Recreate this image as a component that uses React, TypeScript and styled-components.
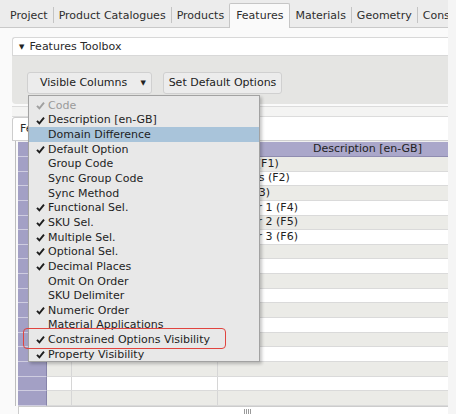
import React from 'react';
import styled, { createGlobalStyle } from 'styled-components';

const GlobalStyle = createGlobalStyle`
  html, body {
    margin: 0;
    padding: 0;
    background: #f5f5f5;
  }
  body {
    font-family: 'DejaVu Sans', Verdana, sans-serif;
    font-size: 11px;
    line-height: 14px;
    color: #2a2a2a;
  }
`;

const Page = styled.div`
  position: relative;
  width: 448px;
  height: 414px;
  overflow: hidden;
  background: #fafafa;
`;

const TabBar = styled.div`
  display: flex;
  align-items: flex-end;
  height: 28px;
  box-sizing: border-box;
  padding-left: 5px;
  background: #ececec;
  border-bottom: 1px solid #c9c9c9;
  white-space: nowrap;
`;

const Tab = styled.div<{ $active?: boolean }>`
  display: flex;
  align-items: center;
  box-sizing: border-box;
  height: ${({ $active }) => ($active ? '25px' : '22px')};
  padding: 0 ${({ $active }) => ($active ? '6px' : '5px')};
  margin-bottom: ${({ $active }) => ($active ? '-1px' : '0')};
  background: ${({ $active }) => ($active ? '#fafafa' : 'transparent')};
  border: ${({ $active }) => ($active ? '1px solid #c6c6c6' : 'none')};
  border-bottom: none;
  border-radius: 2px 2px 0 0;
  color: #2e2e2e;
  flex: none;
`;

const TabSep = styled.div`
  width: 1px;
  height: 16px;
  margin-bottom: 4px;
  background: #c4c4c4;
  flex: none;
`;

const Main = styled.div`
  padding: 9px 0 0 12px;
`;

const ToolboxHeader = styled.div`
  display: flex;
  align-items: center;
  gap: 5px;
  height: 19px;
  box-sizing: border-box;
  padding-left: 6px;
  background: #ffffff;
  border: 1px solid #d8d8d8;
  border-right: none;
  border-radius: 3px 0 0 0;
  color: #2a2a2a;
`;

const Caret = styled.span`
  font-size: 7px;
  color: #222;
`;

const ToolboxBody = styled.div`
  display: flex;
  gap: 11px;
  height: 48px;
  box-sizing: border-box;
  padding: 16px 0 0 15px;
  background: #e5e5e3;
  border-bottom-left-radius: 4px;
`;

const Button = styled.div<{ $w: number; $menu?: boolean }>`
  display: flex;
  align-items: center;
  justify-content: ${({ $menu }) => ($menu ? 'space-between' : 'center')};
  width: ${({ $w }) => $w}px;
  height: 22px;
  box-sizing: border-box;
  padding: 0 ${({ $menu }) => ($menu ? '5px 0 12px' : '0')};
  background: #ececec;
  border: 1px solid #d0d0d0;
  border-radius: 3px;
  color: #222;
  white-space: nowrap;
`;

const SecondPanel = styled.div`
  margin-top: 2px;
`;

const Strip = styled.div`
  height: 9px;
  background: #f4f4f3;
  border-top: 1px solid #dcdcdc;
`;

const PanelTabs = styled.div`
  display: flex;
  align-items: flex-end;
  height: 25px;
  box-sizing: border-box;
  background: #ffffff;
  border-top: 1px solid #dcdcdc;
  border-bottom: 1px solid #cfcfcf;
`;

const PanelTab = styled.div`
  display: flex;
  align-items: center;
  width: 70px;
  height: 23px;
  box-sizing: border-box;
  padding-left: 7px;
  background: #ffffff;
  border: 1px solid #cdcdcd;
  border-bottom: none;
  border-radius: 3px 3px 0 0;
`;

const Grid = styled.div`
  margin-left: 3px;
  padding-left: 2px;
  border-left: 1px solid #bdbdbd;
`;

const GridRow = styled.div<{ $kind: 'head' | 'odd' | 'even' }>`
  display: flex;
  height: ${({ $kind }) => ($kind === 'head' ? '16px' : '14.65px')};
  box-sizing: border-box;
  background: ${({ $kind }) =>
    $kind === 'head' ? '#aaa7ca' : $kind === 'odd' ? '#ebebe7' : '#ffffff'};
  border-bottom: 1px solid
    ${({ $kind }) => ($kind === 'head' ? '#8f8cb0' : '#dadada')};
  border-top: ${({ $kind }) => ($kind === 'head' ? '1px solid #f0f0f0' : 'none')};
  white-space: nowrap;
`;

const Cell = styled.div<{ $w: number; $center?: boolean }>`
  display: flex;
  align-items: center;
  justify-content: ${({ $center }) => ($center ? 'center' : 'flex-start')};
  width: ${({ $w }) => $w}px;
  flex: none;
  box-sizing: border-box;
  padding-left: ${({ $center }) => ($center ? 0 : 4)}px;
  border-right: 1px solid #d6d6d6;
  color: #222;
  overflow: hidden;
`;

const RowHead = styled.div`
  width: 29px;
  flex: none;
  box-sizing: border-box;
  background: #a3a0c5;
  border-right: 1px solid #8784aa;
  border-bottom: 1px solid #cfcde0;
  margin-bottom: -1px;
`;

const Scrollbar = styled.div`
  display: flex;
  align-items: flex-end;
  height: 9px;
  margin-left: 6px;
  box-sizing: border-box;
  padding-left: 225px;
  background: #ffffff;
  border-top: 1px solid #cccccc;
  border-left: 1px solid #cccccc;
`;

const Grip = styled.div`
  width: 8px;
  height: 6px;
  background: repeating-linear-gradient(
    to right,
    #9a9a9a 0,
    #9a9a9a 1px,
    transparent 1px,
    transparent 2px
  );
`;

const Menu = styled.div`
  position: absolute;
  left: 28px;
  top: 95px;
  width: 232px;
  height: 267px;
  box-sizing: border-box;
  padding-top: 2px;
  background: #e8e8e8;
  border: 1px solid #a2a2a2;
  box-shadow: 2px 2px 3px rgba(0, 0, 0, 0.22);
`;

const MenuItem = styled.div<{ $highlight?: boolean; $disabled?: boolean }>`
  position: relative;
  display: flex;
  align-items: center;
  height: 14.65px;
  line-height: 13px;
  padding-left: 19px;
  background: ${({ $highlight }) => ($highlight ? '#a9c4da' : 'transparent')};
  color: ${({ $disabled }) => ($disabled ? '#9a9a9a' : '#1e1e1e')};
  white-space: nowrap;
`;

const CheckMark = styled.svg<{ $disabled?: boolean }>`
  position: absolute;
  left: 7px;
  top: 3px;
  width: 9px;
  height: 9px;
  color: ${({ $disabled }) => ($disabled ? '#a0a0a0' : '#1e1e1e')};
`;

const Annotation = styled.div`
  position: absolute;
  left: 23px;
  top: 328px;
  width: 203px;
  height: 21px;
  box-sizing: border-box;
  border: 1.5px solid #e0443f;
  border-radius: 4px;
  pointer-events: none;
`;

const tabs = ['Project', 'Product Catalogues', 'Products', 'Features', 'Materials', 'Geometry', 'Cons'];

const menuItems: { label: string; checked: boolean; disabled?: boolean; highlight?: boolean }[] = [
  { label: 'Code', checked: true, disabled: true },
  { label: 'Description [en-GB]', checked: true },
  { label: 'Domain Difference', checked: false, highlight: true },
  { label: 'Default Option', checked: true },
  { label: 'Group Code', checked: false },
  { label: 'Sync Group Code', checked: false },
  { label: 'Sync Method', checked: false },
  { label: 'Functional Sel.', checked: true },
  { label: 'SKU Sel.', checked: true },
  { label: 'Multiple Sel.', checked: true },
  { label: 'Optional Sel.', checked: true },
  { label: 'Decimal Places', checked: true },
  { label: 'Omit On Order', checked: false },
  { label: 'SKU Delimiter', checked: false },
  { label: 'Numeric Order', checked: true },
  { label: 'Material Applications', checked: false },
  { label: 'Constrained Options Visibility', checked: true },
  { label: 'Property Visibility', checked: true },
];

const descriptions = ['Finish (F1)', 'Options (F2)', 'Size (F3)', 'Drawer 1 (F4)', 'Drawer 2 (F5)', 'Drawer 3 (F6)'];
const ROWS = 17;

const Check: React.FC<{ disabled?: boolean }> = ({ disabled }) => (
  <CheckMark viewBox="0 0 9 9" $disabled={disabled}>
    <path d="M1 4.8 L3.4 7.4 L8 1.6" fill="none" stroke="currentColor" strokeWidth="1.9" />
  </CheckMark>
);

export default function App() {
  return (
    <Page>
      <GlobalStyle />
      <TabBar>
        {tabs.map((t, i) => (
          <React.Fragment key={t}>
            {i > 0 && t !== 'Features' && tabs[i - 1] !== 'Features' && <TabSep />}
            <Tab $active={t === 'Features'}>{t}</Tab>
          </React.Fragment>
        ))}
      </TabBar>
      <Main>
        <ToolboxHeader>
          <Caret>▼</Caret>
          Features Toolbox
        </ToolboxHeader>
        <ToolboxBody>
          <Button $w={125} $menu>
            Visible Columns
            <Caret>▼</Caret>
          </Button>
          <Button $w={119}>Set Default Options</Button>
        </ToolboxBody>
        <SecondPanel>
          <Strip />
          <PanelTabs>
            <PanelTab>Features</PanelTab>
          </PanelTabs>
          <Grid>
            <GridRow $kind="head">
              <RowHead />
              <Cell $w={25} />
              <Cell $w={146} />
              <Cell $w={300} $center>
                Description [en-GB]
              </Cell>
            </GridRow>
            {Array.from({ length: ROWS }).map((_, i) => (
              <GridRow key={i} $kind={i % 2 === 0 ? 'odd' : 'even'}>
                <RowHead />
                <Cell $w={25} />
                <Cell $w={146} />
                <Cell $w={300}>{descriptions[i] ?? ''}</Cell>
              </GridRow>
            ))}
          </Grid>
          <Scrollbar>
            <Grip />
          </Scrollbar>
        </SecondPanel>
      </Main>
      <Menu>
        {menuItems.map((m) => (
          <MenuItem key={m.label} $highlight={m.highlight} $disabled={m.disabled}>
            {m.checked && <Check disabled={m.disabled} />}
            {m.label}
          </MenuItem>
        ))}
      </Menu>
      <Annotation />
    </Page>
  );
}
